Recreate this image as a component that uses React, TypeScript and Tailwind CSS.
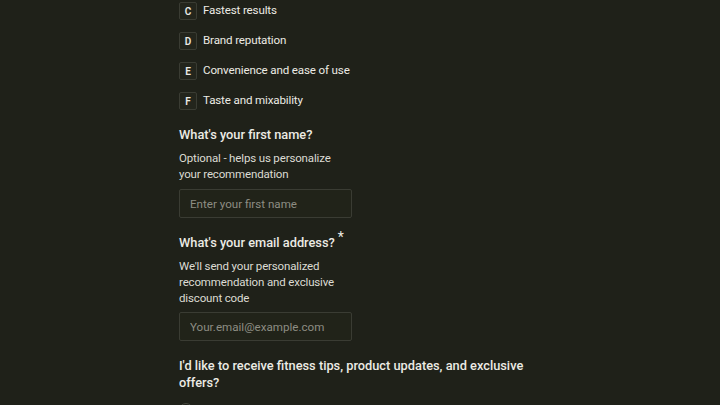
import { useState } from 'react'

const options = [
  { key: 'C', label: 'Fastest results' },
  { key: 'D', label: 'Brand reputation' },
  { key: 'E', label: 'Convenience and ease of use' },
  { key: 'F', label: 'Taste and mixability' },
]

export default function App() {
  const [name, setName] = useState('')
  const [email, setEmail] = useState('')

  return (
    <div className="min-h-screen h-[405px] overflow-hidden bg-[#1f2119] font-['Roboto',sans-serif] text-[#ecebe4]">
      <div className="w-[352px] ml-[179px] pt-[2px]">
        {/* Option list */}
        <div className="flex flex-col gap-[12px]">
          {options.map((o) => (
            <div key={o.key} className="flex items-center gap-[6px] h-[18px]">
              <span className="w-[18px] h-[18px] flex items-center justify-center rounded-[2px] border border-[#3a3c33] bg-[#23251c] text-[10px] font-semibold">
                {o.key}
              </span>
              <span className="text-[11.6px] tracking-[-0.15px]">{o.label}</span>
            </div>
          ))}
        </div>

        {/* First name */}
        <div className="mt-[16px]">
          <h3 className="text-[12.8px] font-medium leading-[18px]">What's your first name?</h3>
          <p className="mt-[6px] w-[172px] text-[11.5px] leading-[16px] text-[#dcdbd3] tracking-[-0.15px]">
            Optional - helps us personalize your recommendation
          </p>
          <input
            value={name}
            onChange={(e) => setName(e.target.value)}
            placeholder="Enter your first name"
            className="mt-[7px] w-[173px] h-[29px] px-[10px] text-[11.6px] bg-[#212319] border border-[#3a3c33] rounded-[2px] placeholder:text-[#8d8d83] outline-none"
          />
        </div>

        {/* Email */}
        <div className="mt-[16px]">
          <h3 className="text-[12.8px] font-medium leading-[18px]">
            What's your email address?<sup className="ml-[3px] text-[14px] top-[-5px] font-normal">*</sup>
          </h3>
          <p className="mt-[6px] w-[172px] text-[11.5px] leading-[16px] text-[#dcdbd3] tracking-[-0.15px]">
            We'll send your personalized recommendation and exclusive discount code
          </p>
          <input
            value={email}
            onChange={(e) => setEmail(e.target.value)}
            placeholder="Your.email@example.com"
            className="mt-[6px] w-[173px] h-[29px] px-[10px] text-[11.6px] bg-[#212319] border border-[#3a3c33] rounded-[2px] placeholder:text-[#8d8d83] outline-none"
          />
        </div>

        {/* Opt-in */}
        <div className="mt-[16px]">
          <h3 className="text-[12.8px] font-medium leading-[17px]">
            I'd like to receive fitness tips, product updates, and exclusive offers?
          </h3>
          <div className="mt-[12px] flex items-center gap-2">
            <span className="w-[14px] h-[14px] rounded-full border border-[#45473d]" />
          </div>
        </div>
      </div>
    </div>
  )
}
